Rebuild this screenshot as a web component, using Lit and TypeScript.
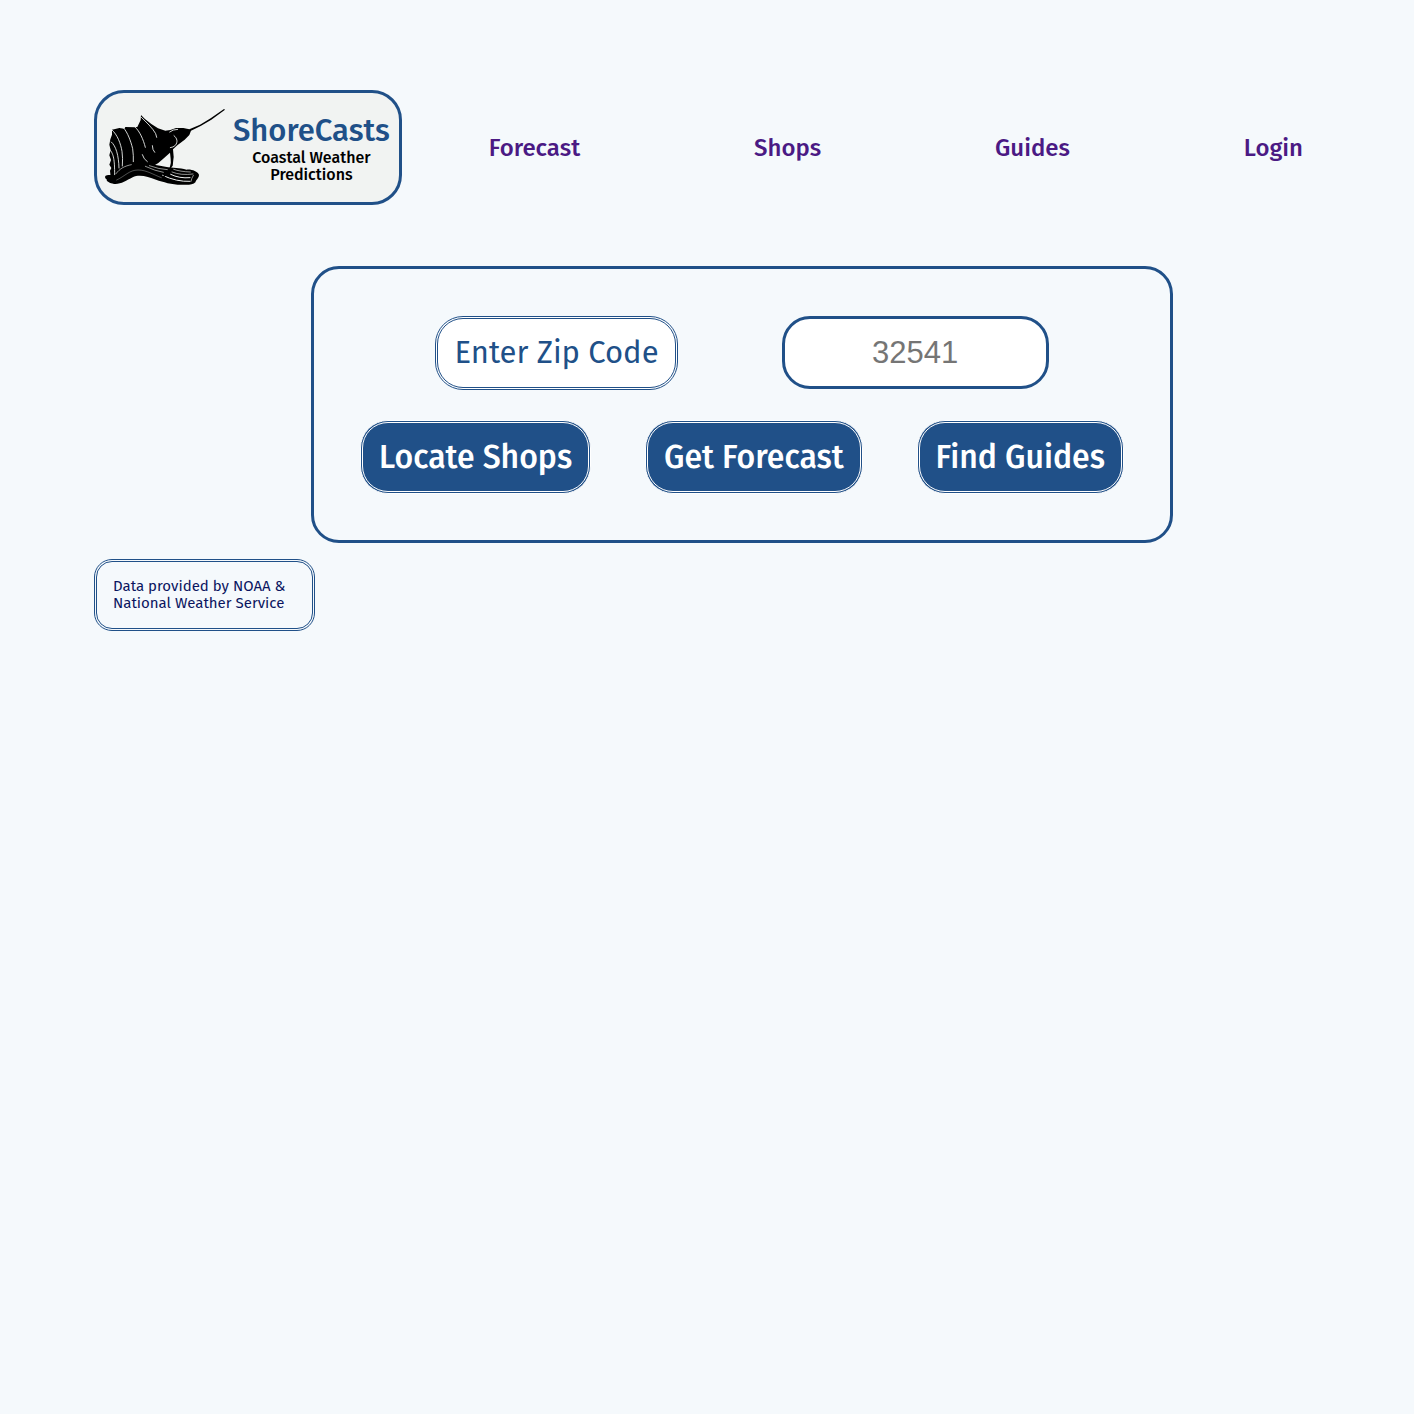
import { LitElement, html, css, svg } from "lit";
import { customElement } from "lit/decorators.js";

const sailfish = svg`
  <path d="M66 131 L88 126 L103 128 L106 123 L134 124 L142 123 L152 102 L153 87 L164 98 L184 114 L204 127 L226 134 L241 132 L258 126 L280 126 L298 130 L330 116 L362 97 L402 69 L405 71 L364 101 L332 120 L303 134 L298 147 L284 161 L262 178 L249 190 L251 212 L248 240 L243 244 L242 218 L240 200 L218 220 L205 231 L190 240 L62 272 L60 254 L64 246 L58 236 L63 222 L58 208 L62 192 L58 176 L61 160 L66 146 Z"/>
  <path d="M46 270 C52 264 62 270 72 264 C90 252 108 234 134 233 C165 231 194 236 226 242 C250 246 268 244 290 251 C304 249 322 256 327 266 C327 278 316 282 317 288 C308 298 290 297 274 296 C244 296 220 288 198 281 C174 272 148 264 128 274 C108 284 92 296 72 294 C60 292 48 286 50 280 C46 278 44 274 46 270 Z"/>
  <g fill="none" stroke="#f1f3f2" stroke-linecap="round" stroke-width="2.6">
    <path d="M66 132 C82 146 92 172 96 196 Q99 216 97 240"/>
    <path d="M101 126 C113 140 122 164 128 188 Q131 210 130 227"/>
    <path d="M136 124 C149 136 160 160 166 184"/>
    <path d="M64 168 C78 180 86 208 87 246"/>
    <path d="M62 194 C70 206 74 218 74 266"/>
    <path d="M154 94 C168 108 188 126 197 143 L200 154"/>
    <path d="M187 179 Q187 192 194 199"/>
    <path d="M157 206 Q161 220 172 227"/>
    <path d="M252 149 C262 157 264 168 256 178 Q250 184 241 185"/>
    <path d="M239 138 Q248 130 263 130"/>
  </g>
  <g fill="none" stroke="#f1f3f2" stroke-linecap="round" stroke-width="1.8">
    <path d="M78 263 C90 247 104 240 124 236"/>
    <path d="M80 282 C106 270 118 252 144 252 C170 252 190 266 214 275" stroke-width="1"/>
    <path d="M166 241 Q196 255 220 259"/>
    <path d="M178 239 Q208 250 232 251"/>
    <path d="M251 250 Q270 257 301 258"/>
    <path d="M246 258 Q273 269 309 264"/>
    <path d="M242 265 Q268 278 300 275" stroke-width="3"/>
    <path d="M218 268 Q260 288 300 286" stroke-width="3"/>
    <path d="M310 268 Q304 278 303 286"/>
  </g>
  <path d="M246 196 Q250 236 235 257 Q230 268 218 274" fill="none" stroke="#000" stroke-width="5"/>
`;

@customElement("app-root")
export class AppRoot extends LitElement {
  static styles = css`
    :host {
      display: block;
      box-sizing: border-box;
      min-height: 100vh;
      padding: 90px 24px 90px 94px;
      background: #f5f9fc;
      color: #000;
      font-family: "Trebuchet MS", "Fira Sans", "Open Sans", sans-serif;
      font-size: 16px;
    }
    * {
      box-sizing: border-box;
    }
    .header {
      display: flex;
      align-items: center;
    }
    .brand {
      display: flex;
      align-items: center;
      gap: 7px;
      padding: 14px 9px 15px 7px;
      border: 3px solid #205088;
      border-radius: 30px;
      background: #f1f3f2;
      color: #000;
      text-decoration: none;
    }
    .fish {
      display: block;
      width: 122px;
      height: 80px;
    }
    .brand-text {
      padding-top: 2px;
      text-align: center;
      font-size: 16px;
      line-height: 17px;
      font-weight: 500;
    }
    .brand-name {
      display: block;
      color: #205088;
      font-size: 31px;
      line-height: 36px;
    }
    .tagline {
      display: block;
      width: min-content;
      margin: 0 auto;
    }
    .nav {
      display: flex;
      flex: 1;
      justify-content: space-around;
    }
    .nav-link {
      color: #4b1a84;
      font-size: 24px;
      line-height: 28px;
      font-weight: 500;
      text-decoration: none;
    }
    .search {
      display: flex;
      flex-direction: column;
      gap: 30px;
      width: fit-content;
      min-width: 66.5%;
      margin: 61px auto 16px;
      padding: 47px 46px 46px;
      border: 3px solid #205088;
      border-radius: 28px;
    }
    .row {
      display: flex;
      justify-content: space-between;
      align-items: center;
      gap: 16px;
    }
    .fields {
      justify-content: center;
      align-items: flex-start;
      gap: 104px;
    }
    .zip-label,
    .zip,
    .action {
      border-radius: 28px;
      font-size: 31px;
      line-height: 36px;
      padding: 16px;
    }
    .zip-label {
      border: 3px double #205088;
      background: #fff;
      color: #205088;
    }
    .zip {
      width: 267px;
      height: 73px;
      border: 3px solid #205088;
      background: #fff;
      color: #205088;
      font-family: "Liberation Sans", Arial, sans-serif;
      font-size: 31px;
      text-align: center;
    }
    .zip::placeholder {
      color: #757575;
    }
    .action {
      border: 3px double #fff;
      background: #205088;
      color: #fff;
      font-family: inherit;
      font-size: 32px;
      font-weight: 500;
    }
    .credit {
      width: 221px;
      padding: 16px;
      border: 3px double #205088;
      border-radius: 18px;
      color: #0b1560;
      font-size: 15px;
      line-height: 17px;
    }
  `;

  private links = ["Forecast", "Shops", "Guides", "Login"];
  private actions = ["Locate Shops", "Get Forecast", "Find Guides"];

  render() {
    return html`
      <header class="header">
        <a class="brand" href="#home">
          <svg class="fish" viewBox="42 63 366 240" aria-hidden="true">${sailfish}</svg>
          <span class="brand-text">
            <span class="brand-name">ShoreCasts</span>
            <span class="tagline">Coastal&nbsp;Weather Predictions</span>
          </span>
        </a>
        <nav class="nav">
          ${this.links.map(
            (name) => html`<a class="nav-link" href="#${name.toLowerCase()}">${name}</a>`
          )}
        </nav>
      </header>
      <main>
        <form class="search" @submit=${(e: Event) => e.preventDefault()}>
          <div class="row fields">
            <label class="zip-label" for="zip">Enter Zip Code</label>
            <input class="zip" id="zip" type="text" inputmode="numeric" placeholder="32541" />
          </div>
          <div class="row">
            ${this.actions.map(
              (name) => html`<button class="action" type="button">${name}</button>`
            )}
          </div>
        </form>
      </main>
      <footer class="credit">Data provided by NOAA &amp; National Weather Service</footer>
    `;
  }
}
